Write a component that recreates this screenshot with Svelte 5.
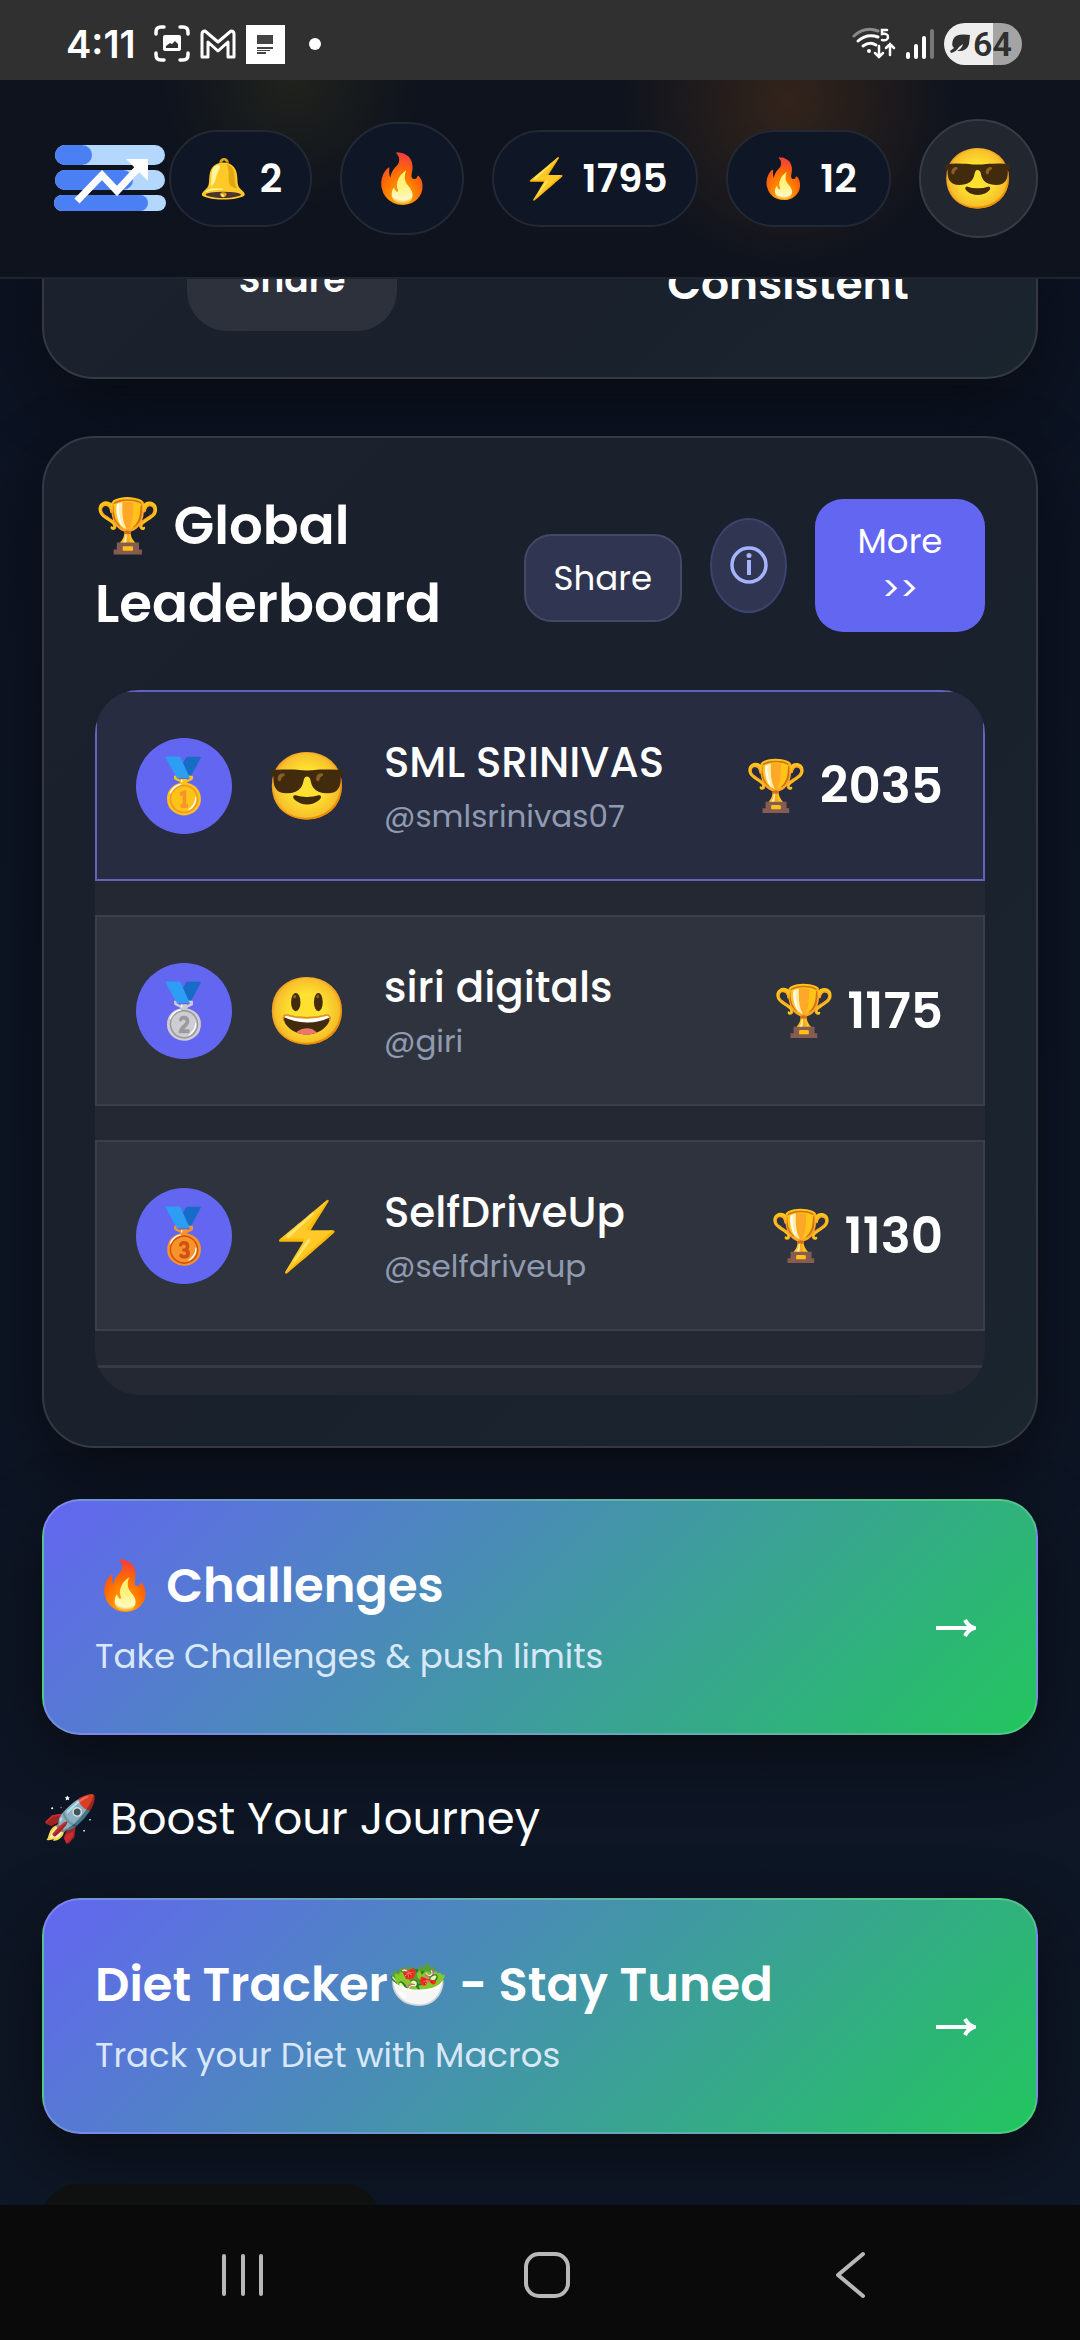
<script>
  const players = [
    { medal: '🥇', avatar: '😎', name: 'SML SRINIVAS', handle: '@smlsrinivas07', score: 2035, me: true },
    { medal: '🥈', avatar: '😃', name: 'siri digitals', handle: '@giri', score: 1175, me: false },
    { medal: '🥉', avatar: '⚡', name: 'SelfDriveUp', handle: '@selfdriveup', score: 1130, me: false }
  ];
</script>

<div class="screen">
  <div class="status">
    <div class="status-left">
      <span class="time">4:11</span>
      <svg width="36" height="38" viewBox="0 0 36 38" fill="none" stroke="#fff" stroke-width="3.5" stroke-linecap="round">
        <path d="M2 9V7q0-5 5-5h3M26 2h3q5 0 5 5v2M34 28v2q0 5-5 5h-3M10 35H7q-5 0-5-5v-2" />
        <path d="M11 10h14q2 0 2 2v12q0 2-2 2H11q-2 0-2-2V12q0-2 2-2zM12 23h12v-4l-3-3-3 3-2-1-4 3z" fill="#fff" fill-rule="evenodd" stroke="none" />
      </svg>
      <svg width="36" height="30" viewBox="0 0 36 30" fill="none" stroke="#fff" stroke-width="3" stroke-linejoin="round">
        <path d="M2 5q0-3 3-3l13 11L31 2q3 0 3 3v23h-6V13l-10 9-10-9v15H2z" />
      </svg>
      <svg width="39" height="39" viewBox="0 0 39 39">
        <rect width="39" height="39" fill="#fff" />
        <path d="M11 10h16v9H11zM11 22h16v2H11zM11 25h13v1H11zM11 27h9v2h-9z" fill="#444" />
      </svg>
      <span class="dot"></span>
    </div>
    <div class="status-right">
      <svg width="44" height="34" viewBox="0 0 44 34" fill="none" stroke="#fff" stroke-width="3" stroke-linecap="round">
        <path d="M2 9Q13-1 26 4" stroke="#8a8a8a" />
        <path d="M6 14q9-8 20-4M11 19q7-5 13-1" />
        <circle cx="17" cy="24" r="2" fill="#fff" stroke="none" />
        <path d="M35 3h-5v4q6-1 6 3 0 4-6 3" stroke-width="2.500" />
        <path d="M27 19v11m-4-4l4 4 4-4M38 28V17m-4 4l4-4 4 4" stroke-width="2.500" />
      </svg>
      <svg width="28" height="30" viewBox="0 0 28 30">
        <rect x="0" y="23" width="4" height="7" rx="2" fill="#fff" />
        <rect x="8" y="15" width="4" height="15" rx="2" fill="#fff" />
        <rect x="16" y="7" width="4" height="23" rx="2" fill="#fff" />
        <rect x="24" y="0" width="4" height="30" rx="2" fill="#777" />
      </svg>
      <span class="battery">
        <svg width="22" height="22" viewBox="0 0 22 22"><path d="M21 2Q6 0 4 7q-2 5 1 8L1 18l1 2q5-1 8-6l4-3q-1 5-6 7 10 1 12-7z" fill="#303030" /></svg>
        64
      </span>
    </div>
  </div>

  <header>
    <svg class="logo" width="112" height="67" viewBox="0 0 112 67">
      <rect x="1" width="110" height="20" rx="10" fill="#b3d7fd" />
      <rect x="1" width="37" height="20" rx="10" fill="#4b80f5" />
      <rect x="1" y="25" width="110" height="20" rx="10" fill="#b3d7fd" />
      <rect x="1" y="25" width="78" height="20" rx="10" fill="#4b80f5" />
      <rect y="50" width="112" height="16" rx="8" fill="#b3d7fd" />
      <rect y="50" width="94" height="16" rx="8" fill="#4b80f5" />
      <path d="M23 56l25-26 15 16 26-28" fill="none" stroke="#fff" stroke-width="7" />
      <path d="M72 14h22v22z" fill="#fff" />
    </svg>
    <button class="pill"><span>🔔</span><b>2</b></button>
    <button class="pill big" aria-label="Streak"><span>🔥</span></button>
    <button class="pill"><span>⚡</span><b>1795</b></button>
    <button class="pill wide"><span>🔥</span><b>12</b></button>
    <button class="avatar" aria-label="Profile">😎</button>
  </header>

  <main>
    <section class="card stats">
      <button class="share-top">Share</button>
      <strong>Consistent</strong>
    </section>

    <section class="card board">
      <div class="board-head">
        <h2>🏆 Global Leaderboard</h2>
        <button class="share">Share</button>
        <button class="info" aria-label="Information">
          <svg width="40" height="40" viewBox="0 0 40 40" fill="none" stroke="#a5b4fc" stroke-width="3.500">
            <circle cx="20" cy="20" r="17" />
            <path d="M20 15v15" stroke-width="4" />
            <circle cx="20" cy="10.500" r="2.500" fill="#a5b4fc" stroke="none" />
          </svg>
        </button>
        <button class="more">More &gt;&gt;</button>
      </div>
      <ol>
        {#each players as p}
          <li class:me={p.me}>
            <span class="medal">{p.medal}</span>
            <span class="face">{p.avatar}</span>
            <div class="who">
              <span class="name">{p.name}</span>
              <span class="handle">{p.handle}</span>
            </div>
            <span class="score">🏆 {p.score}</span>
          </li>
        {/each}
        <li class="next"></li>
      </ol>
    </section>

    <a class="promo" href="#challenges">
      <div><h3>🔥 Challenges</h3><p>Take Challenges &amp; push limits</p></div>
      <svg width="40" height="20" viewBox="0 0 40 20" fill="none" stroke="#fff" stroke-width="4"><path d="M0 10h37M29 2q3 6 9 8-6 2-9 8" /></svg>
    </a>

    <h4>🚀 Boost Your Journey</h4>

    <a class="promo" href="#diet">
      <div><h3>Diet Tracker🥗 - Stay Tuned</h3><p>Track your Diet with Macros</p></div>
      <svg width="40" height="20" viewBox="0 0 40 20" fill="none" stroke="#fff" stroke-width="4"><path d="M0 10h37M29 2q3 6 9 8-6 2-9 8" /></svg>
    </a>

    <div class="peek"></div>
  </main>

  <nav>
    <button aria-label="Recent apps"><svg width="48" height="48" viewBox="0 0 48 48" stroke="#b8b8b8" stroke-width="4" stroke-linecap="round"><path d="M5 5v38M24 5v38M42 5v38" /></svg></button>
    <button aria-label="Home"><svg width="48" height="48" viewBox="0 0 48 48" fill="none" stroke="#b8b8b8" stroke-width="4"><rect x="3" y="3" width="42" height="42" rx="13" /></svg></button>
    <button aria-label="Back"><svg width="48" height="48" viewBox="0 0 48 48" fill="none" stroke="#b8b8b8" stroke-width="4" stroke-linecap="round" stroke-linejoin="round"><path d="M36 3L11 24l25 21" /></svg></button>
  </nav>
</div>

<style>
  :global(body) { margin: 0; background: #0b111c; }
  .screen, .screen * { box-sizing: border-box; }
  .screen {
    font-family: Poppins, Inter, "Noto Color Emoji", sans-serif;
    color: #fff;
    height: 100vh;
    display: flex;
    flex-direction: column;
    overflow: hidden;
  }
  button { font: inherit; color: inherit; border: 0; margin: 0; padding: 0; background: none; }
  h2, h3, h4, p, ol { margin: 0; padding: 0; }
  svg { display: block; flex: none; }

  .status { flex: none; height: 80px; padding: 8px 58px 0 66px; background: #303030; display: flex; justify-content: space-between; align-items: center; }
  .status-left, .status-right { display: flex; align-items: center; gap: 10px; }
  .time { font-family: Inter, sans-serif; font-size: 38px; font-weight: 600; margin-right: 8px; }
  .dot { width: 12px; height: 12px; border-radius: 50%; background: #fff; margin-left: 14px; }
  .battery { display: flex; align-items: center; gap: 2px; height: 42px; width: 78px; padding-left: 5px; border-radius: 21px; background: linear-gradient(90deg, #eee 63%, #a4a4a4 63%); color: #303030; font: 600 34px Roboto, sans-serif; }

  header {
    flex: none;
    height: 199px;
    padding: 0 42px 0 54px;
    display: flex;
    align-items: center;
    justify-content: space-between;
    border-bottom: 2px solid #20242c;
    background:
      radial-gradient(circle 170px at 73% 10%, #33241b, #33241b00),
      radial-gradient(circle 130px at 27% 0, #20221c, #20221c00),
      #0e131d;
  }
  .logo { margin-right: -25px; }
  .pill { display: flex; align-items: center; gap: 12px; height: 97px; padding: 0 28px; border: 2px solid #222935; border-radius: 49px; background: #0f1726; font-size: 39px; }
  .pill b { font-weight: 600; }
  .pill.wide { padding: 0 32px; }
  .pill.big { height: 113px; padding: 0 30px; border-radius: 57px; font-size: 48px; }
  .avatar { width: 119px; height: 119px; border: 2px solid #373b45; border-radius: 50%; background: #22262f; font-size: 59px; }

  main { flex: 1; min-height: 0; overflow: hidden; padding: 0 42px; background: linear-gradient(180deg, #0c1322, #0e1726); display: flex; flex-direction: column; }
  .card { flex: none; border: 2px solid #343943; border-radius: 52px; background: linear-gradient(135deg, #1b212d, #19212d 60%, #1b252e); box-shadow: 0 20px 60px #0a0c12; }
  .stats { margin-top: -60px; height: 160px; padding: 0 0 50px; display: grid; grid-template-columns: 1fr 1fr; align-items: end; justify-items: center; font-weight: 600; }
  .share-top { height: 110px; padding: 0 52px 28px; margin-bottom: 3px; display: flex; align-items: end; border-radius: 40px; background: #2d313b; font-size: 36px; line-height: 46px; }
  .stats strong { font-size: 44px; font-weight: 600; line-height: 60px; margin-bottom: 20px; }

  .board { margin-top: 57px; padding: 49px 51px 51px; }
  .board-head { display: flex; align-items: center; height: 156px; gap: 28px; }
  h2 { flex: 1; font-size: 53px; font-weight: 600; line-height: 78px; }
  .share { height: 88px; padding: 0 28px; margin-top: 26px; border: 2px solid #444a62; border-radius: 28px; background: #303552; font-size: 34px; }
  .info { width: 77px; height: 95px; border: 2px solid #3d426f; border-radius: 50%; background: #303552; display: grid; place-items: center; }
  .more { width: 170px; height: 133px; padding: 0 38px; border-radius: 28px; background: #6366f1; font-size: 34px; line-height: 48px; }

  ol { list-style: none; margin-top: 47px; height: 705px; border-radius: 44px; background: #232833; overflow: hidden; display: flex; flex-direction: column; gap: 34px; }
  li { flex: none; height: 191px; padding: 0 40px 0 39px; border: 2px solid #3b3f49; background: #2f333e; display: flex; align-items: center; }
  li.me { border-color: #6164ba; background: #272c41; }
  li.next { height: 3px; padding: 0; border: 0; background: #363a45; }
  .medal { width: 96px; height: 96px; border-radius: 50%; background: #6366f1; font-size: 53px; display: grid; place-items: center; }
  .face { width: 82px; margin: 0 36px 0 34px; font-size: 66px; line-height: 96px; text-align: center; }
  .who { flex: 1; display: flex; flex-direction: column; }
  .name { font-size: 42px; font-weight: 500; line-height: 60px; }
  .handle { font-size: 31px; line-height: 46px; color: #8f9bb0; }
  .score { font-size: 50px; font-weight: 600; line-height: 76px; white-space: nowrap; }

  .promo { flex: none; height: 236px; margin-top: 51px; padding: 0 60px 0 51px; border: 2px solid #ffffff30; border-radius: 38px; background: linear-gradient(135deg, #6366f1, #22c55e); box-shadow: 0 20px 60px #0a0c12; color: #fff; text-decoration: none; display: flex; align-items: center; justify-content: space-between; }
  .promo svg { margin-top: 22px; }
  h3 { font-size: 48px; font-weight: 600; line-height: 72px; }
  p { font-size: 34px; line-height: 56px; color: #d9e8f8; margin-top: 6px; }
  h4 { font-size: 45px; font-weight: 400; line-height: 68px; margin: 50px 0 -6px; }
  .peek { flex: none; width: 338px; height: 120px; margin: 50px 0 0; border-radius: 36px; background: #0e110f; }

  nav { flex: none; height: 135px; padding: 4px 91px 0; background: #0a0a0a; display: flex; align-items: center; justify-content: space-between; }
  nav button { padding: 0 128px; }
</style>
